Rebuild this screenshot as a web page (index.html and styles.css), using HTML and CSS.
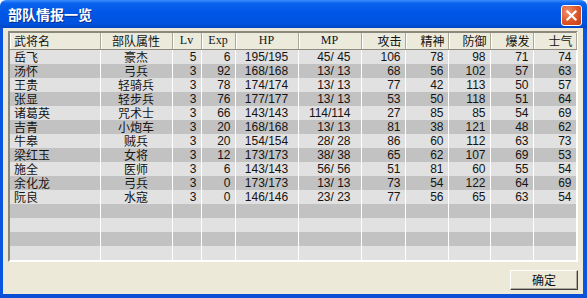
FILE: index.html
```html
<!DOCTYPE html>
<html lang="zh">
<head>
    <meta charset="UTF-8">
    <title>部队情报一览</title>
    <link rel="stylesheet" href="styles.css">
</head>
<body>

    <div class="window">
        <!-- Title Bar -->
        <div class="titlebar">
            <span class="title">部队情报一览</span>
            <span class="close-btn">
                <svg width="21" height="21" viewBox="0 0 21 21">
                    <line x1="6" y1="6" x2="15" y2="15" stroke="#fff" stroke-width="2.4" stroke-linecap="square"/>
                    <line x1="15" y1="6" x2="6" y2="15" stroke="#fff" stroke-width="2.4" stroke-linecap="square"/>
                </svg>
            </span>
        </div>

        <!-- Body -->
        <div class="frame">
            <div class="grid-box">
                <table class="grid">
                    <colgroup>
                        <col style="width:90px">
                        <col style="width:72px">
                        <col style="width:29px">
                        <col style="width:34px">
                        <col style="width:63px">
                        <col style="width:63px">
                        <col style="width:44px">
                        <col style="width:43px">
                        <col style="width:42px">
                        <col style="width:43px">
                        <col style="width:43px">
                    </colgroup>
                    <thead>
                        <tr>
                            <th class="left">武将名</th>
                            <th>部队属性</th>
                            <th class="latin">Lv</th>
                            <th class="latin">Exp</th>
                            <th class="latin">HP</th>
                            <th class="latin">MP</th>
                            <th class="right">攻击</th>
                            <th class="right">精神</th>
                            <th class="right">防御</th>
                            <th class="right">爆发</th>
                            <th class="right">士气</th>
                        </tr>
                    </thead>
                    <tbody id="rows"></tbody>
                </table>
            </div>

            <div class="footer">
                <button class="btn">确定</button>
            </div>
        </div>
    </div>

    <script>
        const units = [
            ['岳飞', '豪杰', 5, 6, '195/195', '45/ 45', 106, 78, 98, 71, 74],
            ['汤怀', '弓兵', 3, 92, '168/168', '13/ 13', 68, 56, 102, 57, 63],
            ['王贵', '轻骑兵', 3, 78, '174/174', '13/ 13', 77, 42, 113, 50, 57],
            ['张显', '轻步兵', 3, 76, '177/177', '13/ 13', 53, 50, 118, 51, 64],
            ['诸葛英', '咒术士', 3, 66, '143/143', '114/114', 27, 85, 85, 54, 69],
            ['吉青', '小炮车', 3, 20, '168/168', '13/ 13', 81, 38, 121, 48, 62],
            ['牛皋', '贼兵', 3, 20, '154/154', '28/ 28', 86, 60, 112, 63, 73],
            ['梁红玉', '女将', 3, 12, '173/173', '38/ 38', 65, 62, 107, 69, 53],
            ['施全', '医师', 3, 6, '143/143', '56/ 56', 51, 81, 60, 55, 54],
            ['余化龙', '弓兵', 3, 0, '173/173', '13/ 13', 73, 54, 122, 64, 69],
            ['阮良', '水寇', 3, 0, '146/146', '23/ 23', 77, 56, 65, 63, 54]
        ];
        const classes = ['name', 'kind', 'num', 'num', 'hp', 'mp', 'num', 'num', 'num', 'num', 'num'];
        const tbody = document.getElementById('rows');

        // 11 units plus 4 empty striped rows
        for (let i = 0; i < 15; i++) {
            const tr = document.createElement('tr');
            const unit = units[i];
            classes.forEach((cls, c) => {
                const td = document.createElement('td');
                td.className = cls;
                td.textContent = unit ? unit[c] : '';
                tr.appendChild(td);
            });
            tbody.appendChild(tr);
        }
    </script>

</body>
</html>
```

FILE: styles.css
```css
* {
    margin: 0;
    padding: 0;
    box-sizing: border-box;
}

body {
    width: 587px;
    height: 298px;
    overflow: hidden;
    font-family: "Noto Sans CJK SC", sans-serif;
    font-size: 12px;
    color: #141414;
}

.window {
    display: flex;
    flex-direction: column;
    width: 587px;
    height: 298px;
}

/* Title Bar */
.titlebar {
    height: 28px;
    display: flex;
    align-items: center;
    justify-content: space-between;
    padding: 0 5px 0 8px;
    background: linear-gradient(to bottom, #3c8ffd 0%, #0a62ee 12%, #0056e6 45%, #0052df 85%, #0046c4 100%);
    border-radius: 6px 6px 0 0;
}

.title {
    color: #fff;
    font-size: 14px;
    font-weight: 700;
    line-height: 28px;
    text-shadow: 1px 1px 0 #0a2f90;
}

.close-btn {
    width: 21px;
    height: 21px;
    margin-top: 2px;
    border: 1px solid #fff;
    border-radius: 3px;
    background: radial-gradient(circle at 30% 30%, #f0906c, #dd5428 55%, #c33c12);
    display: flex;
    align-items: center;
    justify-content: center;
}

.close-btn svg {
    display: block;
}

/* Window body */
.frame {
    flex: 1;
    display: flex;
    flex-direction: column;
    background: #ece9d8;
    border-left: 3px solid #0a55e0;
    border-right: 4px solid #0a55e0;
    border-bottom: 4px solid #0a4fd4;
    padding: 3px 5px 0 5px;
}

.grid-box {
    border: 2px solid;
    border-color: #8a887c #fff #fff #8a887c;
    background: #e1e1e1;
}

.grid {
    width: 566px;
    table-layout: fixed;
    border-collapse: collapse;
}

.grid th {
    height: 16px;
    padding: 0 4px;
    font-weight: 400;
    line-height: 15px;
    background: #ebeadb;
    border-right: 1px solid #aca899;
    border-bottom: 1px solid #8d8b80;
    box-shadow: inset 1px 0 #fff;
    text-align: center;
    white-space: nowrap;
}

.grid th.left {
    text-align: left;
}

.grid th.right {
    text-align: right;
    padding-right: 3px;
}

.grid th.latin {
    font-family: "Liberation Serif", serif;
    font-size: 12px;
}

.grid td {
    height: 14px;
    line-height: 14px;
    padding: 0 4px;
    border-right: 1px solid #fff;
    white-space: pre;
}

.grid tbody tr:nth-child(odd) td {
    background: #e1e1e1;
}

.grid tbody tr:nth-child(even) td {
    background: #c2c2c2;
}

.grid td.name {
    text-align: left;
}

.grid td.kind {
    text-align: center;
}

.grid td.num,
.grid td.hp,
.grid td.mp {
    font-family: "Liberation Sans", sans-serif;
    font-size: 12px;
}

.grid td.num {
    text-align: right;
    padding-right: 4px;
}

.grid td.hp {
    text-align: center;
}

.grid td.mp {
    text-align: right;
    padding-right: 10px;
}

/* Footer */
.footer {
    display: flex;
    justify-content: flex-end;
    padding-top: 8px;
}

.btn {
    width: 68px;
    height: 20px;
    font-family: "Noto Sans CJK SC", sans-serif;
    font-size: 12px;
    line-height: 16px;
    color: #111;
    background: #ece9d8;
    border: 1px solid;
    border-color: #fff #404040 #404040 #fff;
    box-shadow: inset -1px -1px #aca899;
}
```
